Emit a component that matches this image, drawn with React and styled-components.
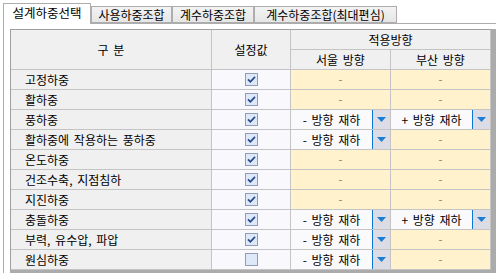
import React from "react";
import styled, { createGlobalStyle } from "styled-components";

const Global = createGlobalStyle`
  html, body, #root { margin: 0; padding: 0; height: 100%; }
  body {
    background: #ffffff;
    overflow: hidden;
    font-family: "Noto Sans CJK KR", "Noto Sans", sans-serif;
    font-size: 12px;
    word-spacing: 2px;
    color: #000;
  }
`;

const Page = styled.div`
  display: flex;
  flex-direction: column;
  height: 100%;
`;

const TabBar = styled.div`
  display: flex;
  align-items: flex-end;
  height: 23px;
  padding-left: 3px;
  box-sizing: border-box;
`;

const Tab = styled.div`
  box-sizing: border-box;
  width: ${(p) => p.$w}px;
  height: ${(p) => (p.$active ? 21 : 17)}px;
  margin-bottom: ${(p) => (p.$active ? -1 : 0)}px;
  border: 1px solid #adadad;
  border-bottom: ${(p) => (p.$active ? "none" : "1px solid #adadad")};
  background: ${(p) => (p.$active ? "#ffffff" : "linear-gradient(#f3f3f3, #e6e6e6)")};
  display: flex;
  align-items: center;
  justify-content: center;
  white-space: nowrap;
  line-height: 1;
  position: relative;
  z-index: ${(p) => (p.$active ? 1 : 0)};
  padding-bottom: ${(p) => (p.$active ? 1 : 0)}px;
  font-size: ${(p) => (p.$active ? 12.5 : 12)}px;
`;

const Panel = styled.div`
  flex: 1;
  border-top: 1px solid #adadad;
  border-left: 1px solid #adadad;
  margin-left: 3px;
  padding: 5px 0 0 6px;
  background: #ffffff;
  display: flex;
  min-height: 0;
`;

const GridArea = styled.div`
  flex: 1;
  background: #ababab;
  overflow: hidden;
`;

const Table = styled.div`
  display: grid;
  grid-template-columns: 201px 79px 100px 100px;
  grid-auto-rows: 20px;
  width: max-content;
  border-top: 1px solid #a0a0a0;
  border-left: 1px solid #a0a0a0;
`;

const Cell = styled.div`
  box-sizing: border-box;
  border-right: 1px solid #c4c4c4;
  border-bottom: 1px solid #c4c4c4;
  display: flex;
  align-items: center;
  white-space: nowrap;
  line-height: 1;
  overflow: hidden;
`;

const HeadCell = styled(Cell)`
  background: #f0f0f0;
  justify-content: center;
  grid-row: ${(p) => p.$row || "auto"};
  grid-column: ${(p) => p.$col || "auto"};
`;

const NameCell = styled(Cell)`
  background: #f0f0f0;
  padding-left: 14px;
`;

const CheckCell = styled(Cell)`
  background: #f8f8fd;
  justify-content: center;
`;

const EmptyCell = styled(Cell)`
  background: #fff2cc;
  justify-content: center;
  color: #7a7a7a;
  font-size: 11px;
`;

const ComboCell = styled(Cell)`
  background: #fafafd;
  align-items: stretch;
`;

const ComboText = styled.div`
  flex: 1;
  display: flex;
  align-items: center;
  justify-content: center;
`;

const ComboButton = styled.div`
  width: 17px;
  border-left: 1px solid #0a78d2;
  background: #dcdce6;
  display: flex;
  align-items: center;
  justify-content: center;
`;

const CheckBox = ({ checked }) => (
  <svg width="13" height="13" viewBox="0 0 13 13">
    <rect x="0.5" y="0.5" width="12" height="12" fill="#dde8f8" stroke="#8f9db6" />
    {checked && (
      <path d="M3 6.3 L5.4 8.8 L10 3.8" fill="none" stroke="#2a4a8e" strokeWidth="1.7" />
    )}
  </svg>
);

const Arrow = () => (
  <svg width="9" height="5" viewBox="0 0 9 5">
    <polygon points="0,0 9,0 4.5,5" fill="#1b7ed6" />
  </svg>
);

const Combo = ({ value }) => (
  <ComboCell>
    <ComboText>{value}</ComboText>
    <ComboButton>
      <Arrow />
    </ComboButton>
  </ComboCell>
);

const tabs = [
  { label: "설계하중선택", w: 88, active: true },
  { label: "사용하중조합", w: 81 },
  { label: "계수하중조합", w: 82 },
  { label: "계수하중조합(최대편심)", w: 143 },
];

const rows = [
  { name: "고정하중", checked: true },
  { name: "활하중", checked: true },
  { name: "풍하중", checked: true, seoul: "- 방향 재하", busan: "+ 방향 재하" },
  { name: "활하중에 작용하는 풍하중", checked: true, seoul: "- 방향 재하" },
  { name: "온도하중", checked: true },
  { name: "건조수축, 지점침하", checked: true },
  { name: "지진하중", checked: true },
  { name: "충돌하중", checked: true, seoul: "- 방향 재하", busan: "+ 방향 재하" },
  { name: "부력, 유수압, 파압", checked: true, seoul: "- 방향 재하" },
  { name: "원심하중", checked: false, seoul: "- 방향 재하" },
];

export default function App() {
  return (
    <Page>
      <Global />
      <TabBar>
        {tabs.map((t) => (
          <Tab key={t.label} $w={t.w} $active={t.active}>
            {t.label}
          </Tab>
        ))}
      </TabBar>
      <Panel>
        <GridArea>
          <Table>
            <HeadCell $row="span 2">구 분</HeadCell>
            <HeadCell $row="span 2">설정값</HeadCell>
            <HeadCell $col="span 2">적용방향</HeadCell>
            <HeadCell>서울 방향</HeadCell>
            <HeadCell>부산 방향</HeadCell>
            {rows.map((r) => (
              <React.Fragment key={r.name}>
                <NameCell>{r.name}</NameCell>
                <CheckCell>
                  <CheckBox checked={r.checked} />
                </CheckCell>
                {r.seoul ? <Combo value={r.seoul} /> : <EmptyCell>-</EmptyCell>}
                {r.busan ? <Combo value={r.busan} /> : <EmptyCell>-</EmptyCell>}
              </React.Fragment>
            ))}
          </Table>
        </GridArea>
      </Panel>
    </Page>
  );
}
